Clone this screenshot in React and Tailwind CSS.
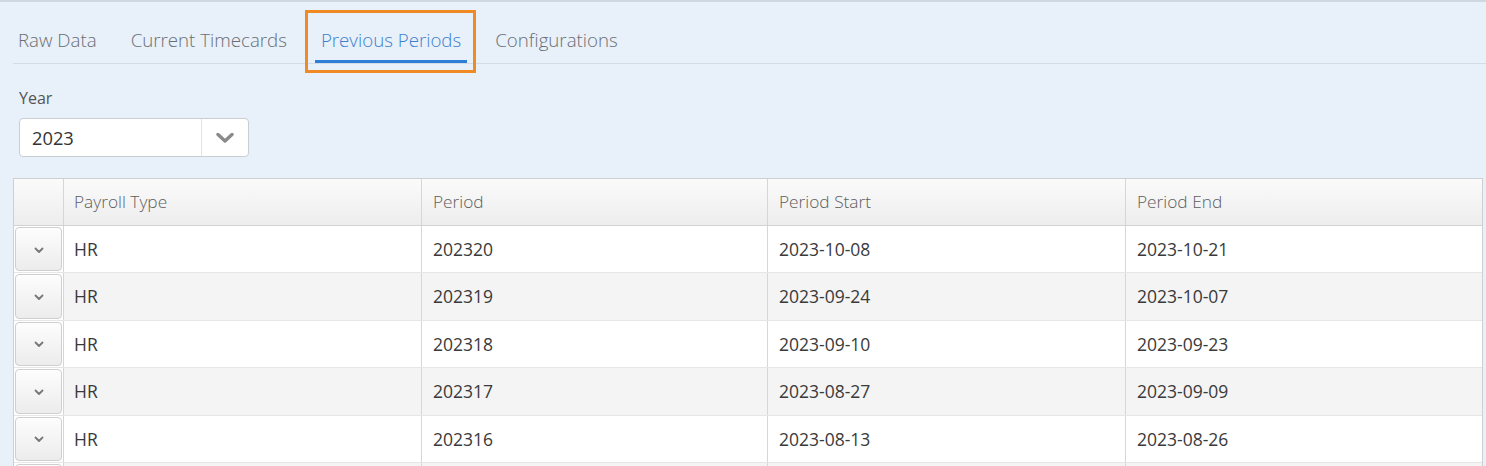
import React from "react";

const rows = [
  ["HR", "202320", "2023-10-08", "2023-10-21"],
  ["HR", "202319", "2023-09-24", "2023-10-07"],
  ["HR", "202318", "2023-09-10", "2023-09-23"],
  ["HR", "202317", "2023-08-27", "2023-09-09"],
  ["HR", "202316", "2023-08-13", "2023-08-26"],
  ["", "", "", ""],
];

function SmallChevron() {
  return (
    <svg width="10" height="7" viewBox="0 0 10 7" className="text-[#777]">
      <path d="M1.5 1.5 L5 5 L8.5 1.5" fill="none" stroke="currentColor" strokeWidth="1.8" strokeLinecap="round" strokeLinejoin="round" />
    </svg>
  );
}

function BoldChevron() {
  return (
    <svg width="18" height="12" viewBox="0 0 18 12" className="text-[#8a8a8a]">
      <path d="M2 2.5 L9 9 L16 2.5" fill="none" stroke="currentColor" strokeWidth="3.4" strokeLinecap="round" strokeLinejoin="round" />
    </svg>
  );
}

export default function App() {
  const font = { fontFamily: '"Open Sans", "Liberation Sans", sans-serif' };
  return (
    <div className="w-[1486px] h-[466px] overflow-hidden bg-[#e8f0f9] border-t-2 border-[#cfd7e0]" style={font}>
      <div className="pl-[13px]">
        {/* Tabs */}
        <div className="flex gap-[34px] pl-[5px] h-[62px] border-b border-[#d3dbe4] text-[18.7px] font-light">
          <div className="pt-[25px] leading-[26px] text-[#6a6f75]">Raw Data</div>
          <div className="pt-[25px] leading-[26px] text-[#6a6f75]">Current Timecards</div>
          <div className="relative pt-[25px] leading-[26px] text-[#3d80cf]">
            Previous Periods
            <div className="absolute left-[-6px] right-[-6px] bottom-0 h-[3px] bg-[#2f7fd8]" />
            <div className="absolute left-[-16px] right-[-15px] top-[8px] bottom-[-10px] border-[3px] border-[#f08a24]" />
          </div>
          <div className="pt-[25px] leading-[26px] text-[#6a6f75]">Configurations</div>
        </div>

        {/* Year */}
        <div className="pl-[6px] pt-[24px]">
          <div className="text-[16px] text-[#555] leading-[20px]">Year</div>
          <div className="mt-[10px] w-[230px] h-[39px] bg-white border border-[#c9ced4] rounded-[4px] flex items-stretch">
            <div className="flex-1 flex items-center pl-[12px] text-[18.3px] text-[#333]">2023</div>
            <div className="w-[47px] border-l border-[#e3e3e3] flex items-center justify-center">
              <BoldChevron />
            </div>
          </div>
        </div>

        {/* Table */}
        <div className="mt-[21px] w-[1470px] border-l border-r border-t border-[#cfcfcf] bg-white">
          <div className="flex h-[47px] border-b border-[#d2d2d2] bg-gradient-to-b from-[#fbfbfb] to-[#ededed] text-[17.3px] font-light text-[#5e5e5e]">
            <div className="w-[50px] border-r border-[#d6d6d6]" />
            <div className="w-[358px] border-r border-[#d6d6d6] flex items-center pl-[10px]">Payroll Type</div>
            <div className="w-[346px] border-r border-[#d6d6d6] flex items-center pl-[11px]">Period</div>
            <div className="w-[358px] border-r border-[#d6d6d6] flex items-center pl-[11px]">Period Start</div>
            <div className="flex-1 flex items-center pl-[11px]">Period End</div>
          </div>
          {rows.map((r, i) => (
            <div
              key={i}
              className={`flex h-[47.4px] border-b border-[#e6e6e6] text-[17.5px] text-[#3a3a3a] ${i % 2 === 1 ? "bg-[#f4f4f4]" : "bg-white"}`}
            >
              <div className="w-[50px] border-r border-[#d6d6d6] flex items-stretch bg-white">
                <div className="m-[1px] flex-1 rounded-[4px] border border-[#cfcfcf] bg-gradient-to-b from-[#fdfdfd] to-[#ececec] flex items-center justify-center pt-[2px]">
                  <SmallChevron />
                </div>
              </div>
              <div className="w-[358px] border-r border-[#d6d6d6] flex items-center pl-[10px]">{r[0]}</div>
              <div className="w-[346px] border-r border-[#d6d6d6] flex items-center pl-[11px]">{r[1]}</div>
              <div className="w-[358px] border-r border-[#d6d6d6] flex items-center pl-[11px]">{r[2]}</div>
              <div className="flex-1 flex items-center pl-[11px]">{r[3]}</div>
            </div>
          ))}
        </div>
      </div>
    </div>
  );
}
